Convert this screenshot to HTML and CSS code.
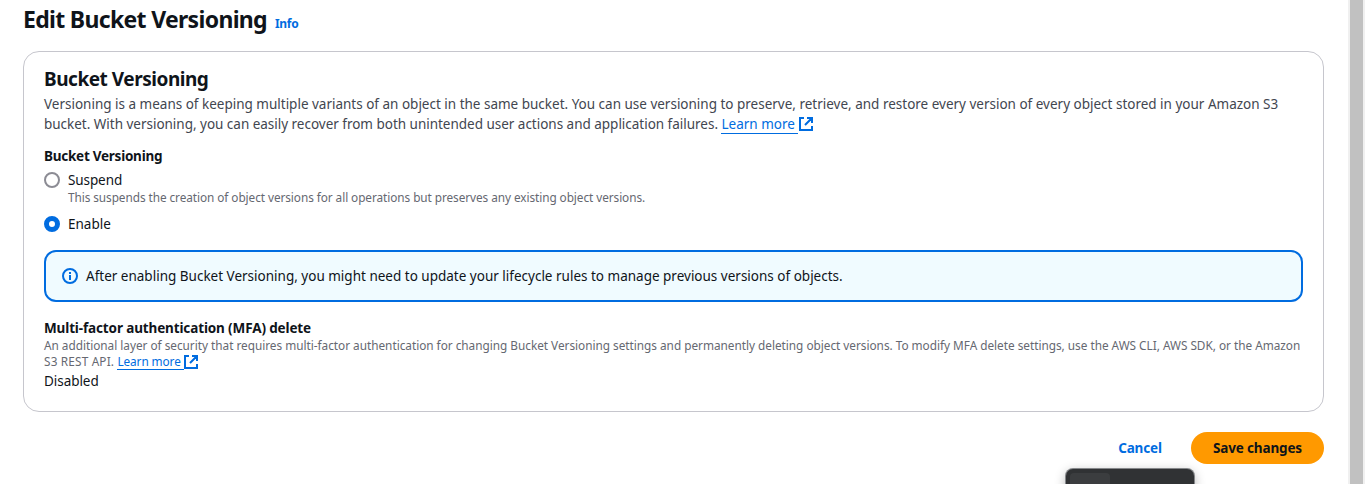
FILE: index.html
```html
<!DOCTYPE html>
<html lang="en">
<head>
<meta charset="utf-8">
<title>Edit Bucket Versioning</title>
<link rel="stylesheet" href="styles.css">
</head>
<body>
<main class="page">
  <header class="page-header">
    <h1 class="page-title">Edit Bucket Versioning</h1>
    <a class="info">Info</a>
  </header>
  <section class="card">
    <h2 class="card-title">Bucket Versioning</h2>
    <p class="description">Versioning is a means of keeping multiple variants of an object in the same bucket. You can use versioning to preserve, retrieve, and restore every version of every object stored in your Amazon S3<br><span class="d2">bucket. With versioning, you can easily recover from both unintended user actions and application failures. </span><a class="link">Learn more </a><svg class="external" viewBox="0 0 14 14"><path d="M5 1H1v12h12V9M8 1h5v5M13 1L6 8"/></svg></p>
    <h3 class="label label-versioning">Bucket Versioning</h3>
    <div class="option">
      <span class="radio"></span>
      <div><div class="option-name suspend">Suspend</div><div class="hint">This suspends the creation of object versions for all operations but preserves any existing object versions.</div></div>
    </div>
    <div class="option option-enable">
      <span class="radio radio-on"></span>
      <div class="option-name">Enable</div>
    </div>
    <div class="alert">
      <svg class="info-icon" viewBox="0 0 16 16"><circle cx="8" cy="8" r="7"/><path d="M8 12V7M8 6V4"/></svg>
      <span class="alert-text">After enabling Bucket Versioning, you might need to update your lifecycle rules to manage previous versions of objects.</span>
    </div>
    <h3 class="label label-mfa">Multi-factor authentication (MFA) delete</h3>
    <p class="mfa-description">An additional layer of security that requires multi-factor authentication for changing Bucket Versioning settings and permanently deleting object versions. To modify MFA delete settings, use the AWS CLI, AWS SDK, or the Amazon<br><span class="m2">S3 REST API. </span><a class="link link-small">Learn more </a><svg class="external external-small" viewBox="0 0 14 14"><path d="M5 1H1v12h12V9M8 1h5v5M13 1L6 8"/></svg></p>
    <div class="status">Disabled</div>
  </section>
  <footer class="actions">
    <button class="cancel">Cancel</button>
    <button class="save">Save changes</button>
  </footer>
</main>
<div class="scroll-track"><div class="scroll-thumb"></div></div>
<div class="floating-panel"><div class="floating-tab"></div></div>
</body>
</html>
```
FILE: styles.css
```css
* { box-sizing: border-box; }
body { margin: 0; height: 484px; display: flex; overflow: hidden; position: relative; background: #fff; color: #0f141a; font: 13.5px/20px "Noto Sans", sans-serif; }
h1, h2, h3, p { margin: 0; }
button { border: 0; font: inherit; padding: 0; }
.page { width: 1348px; padding: 5px 24px 0 23px; white-space: nowrap; }
.page-header { display: flex; height: 30px; }
.page-title { font-size: 23px; line-height: 28px; width: 252px; letter-spacing: -0.68px; }
.info { font-size: 12px; font-weight: 700; color: #006ce0; line-height: 37px; letter-spacing: -0.3px; }
.card { margin-top: 16px; height: 361px; border: 1px solid #c6c6cd; border-radius: 16px; padding: 15px 20px; }
.card-title { font-size: 19px; line-height: 24px; letter-spacing: -0.47px; }
.description { color: #424650; margin-top: 3px; height: 40px; letter-spacing: -0.005px; }
.d2 { letter-spacing: -0.018px; }
.link { color: #006ce0; border-bottom: 1px solid #006ce0; white-space: pre; }
.link-small { letter-spacing: -0.08px; }
.external { width: 14px; height: 14px; fill: none; stroke: #006ce0; stroke-width: 2; vertical-align: -2px; margin-left: 1px; }
.external-small { vertical-align: -3px; margin-left: 0; }
.label { font-size: 13.5px; line-height: 20px; }
.label-versioning { margin-top: 12px; letter-spacing: -0.25px; }
.option { display: flex; gap: 8px; margin-top: 4px; }
.option-enable { margin-top: 8px; }
.suspend { letter-spacing: -0.1px; }
.radio { width: 16px; height: 16px; margin-top: 2px; border: 2px solid #8c8c94; border-radius: 50%; }
.radio-on { border: 5px solid #006ce0; }
.hint { color: #656871; font-size: 11.8px; line-height: 16px; margin-top: -1px; height: 17px; letter-spacing: -0.065px; }
.alert { display: flex; align-items: center; gap: 8px; height: 52px; margin-top: 16px; padding: 0 16px; border: 2px solid #006ce0; border-radius: 12px; background: #f0fbff; }
.info-icon { width: 16px; height: 16px; fill: none; stroke: #006ce0; stroke-width: 2; }
.label-mfa { margin-top: 16px; letter-spacing: -0.13px; }
.mfa-description { color: #656871; font-size: 11.8px; line-height: 16px; margin-top: -1px; height: 33px; letter-spacing: -0.017px; }
.m2 { letter-spacing: 0.17px; }
.status { margin-top: 1px; letter-spacing: -0.05px; }
.actions { display: flex; justify-content: flex-end; margin-top: 20px; font-weight: 700; }
.cancel, .save { letter-spacing: -0.15px; }
.cancel { background: none; color: #006ce0; width: 84px; height: 32px; margin-right: 9px; }
.save { background: #ff9900; color: #0f141a; width: 133px; height: 32px; border-radius: 16px; }
.scroll-track { width: 17px; background: #f0f0f0; padding: 0 2px; }
.scroll-thumb { height: 484px; background: #c1c1c1; }
.floating-panel { position: absolute; left: 1066px; top: 469px; width: 128px; height: 24px; padding: 4px; border-radius: 7px; background: #303234; box-shadow: 0 0 0 1px #85878a, 0 3px 12px #0005; }
.floating-tab { width: 40px; height: 20px; border-radius: 4px; background: #3b3d3f; }
```
